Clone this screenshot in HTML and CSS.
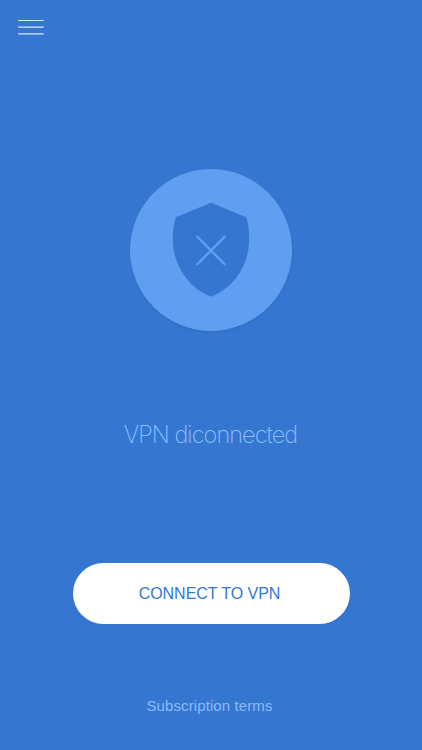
FILE: index.html
```html
<!DOCTYPE html>
<html lang="en">
<head>
<meta charset="utf-8">
<title>VPN</title>
<link rel="stylesheet" href="styles.css">
</head>
<body>
<main class="screen">
  <header class="topbar">
    <button class="menu" aria-label="Menu">
      <svg class="menu-icon" viewBox="0 0 26 16" width="26" height="16"><path d="M.3 .5 H25.7 M.3 7.1 H25.7 M.3 13.9 H25.7"/></svg>
    </button>
  </header>
  <div class="badge">
    <svg class="shield" viewBox="0 0 78 96" width="78" height="96">
      <path class="shield-body" d="M39 .7 L74.3 15.2 Q77.2 25 77.2 37 C77.2 64 61 86 39 94.8 C17 86 .8 64 .8 37 Q.8 25 3.7 15.2 Z"/>
      <path class="shield-cross" d="M24.6 34 L53.4 63 M53.4 34 L24.6 63"/>
    </svg>
  </div>
  <h1 class="status">VPN diconnected</h1>
  <button class="connect">CONNECT TO VPN</button>
  <a class="terms">Subscription terms</a>
</main>
</body>
</html>
```

FILE: styles.css
```css
* { box-sizing: border-box; }
body { margin: 0; background: #3576d0; }
button { border: 0; padding: 0; }
.screen {
  width: 422px;
  height: 750px;
  display: flex;
  flex-direction: column;
  align-items: center;
  overflow: hidden;
  background: #3576d0;
  font-family: "Liberation Sans", sans-serif;
}
.topbar { align-self: stretch; height: 169px; padding: 20px 18px; }
.menu { display: flex; width: 26px; background: none; }
.menu-icon { display: block; stroke: #d7ebff; stroke-width: 1.2; fill: none; }
.badge {
  width: 162px;
  height: 162px;
  border-radius: 50%;
  background: #609ef1;
  box-shadow: 0 1px 2px rgba(30, 75, 145, .25);
  display: flex;
  justify-content: center;
  padding-top: 33px;
  flex: none;
}
.shield-body { fill: #3576d0; }
.shield-cross { stroke: #609ef1; stroke-width: 2.4; fill: none; }
.status {
  margin: 88px 0 0;
  padding-right: 1px;
  height: 32px;
  line-height: 32px;
  font-family: Inter, sans-serif;
  font-size: 23.5px;
  font-weight: 200;
  letter-spacing: -.95px;
  color: #8cc0ff;
  white-space: nowrap;
}
.connect {
  margin-top: 112px;
  width: 277px;
  height: 61px;
  flex: none;
  border-radius: 31px;
  background: #fff;
  color: #3576d0;
  font: 16px/61px "Liberation Sans", sans-serif;
  letter-spacing: -.05px;
  padding-right: 3px;
}
.terms { margin-top: 72px; padding-right: 3px; font-size: 15px; line-height: 20px; letter-spacing: .1px; color: #8bbcfa; }
```
